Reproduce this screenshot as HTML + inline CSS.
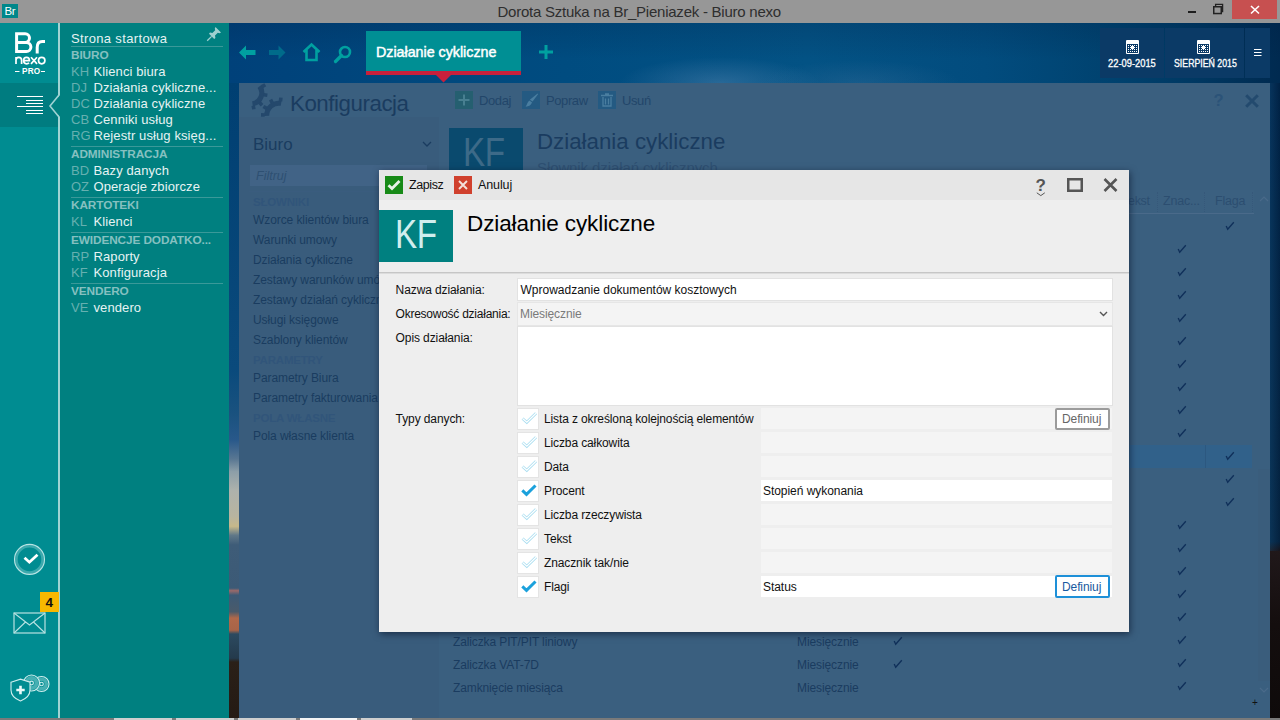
<!DOCTYPE html>
<html><head><meta charset="utf-8"><style>
*{margin:0;padding:0;box-sizing:border-box}
html,body{width:1280px;height:720px;overflow:hidden;background:#3a5f7f;font-family:"Liberation Sans",sans-serif}
.a{position:absolute;white-space:nowrap}
svg{position:absolute;overflow:visible}
</style></head><body>
<div class="a" style="left:0px;top:0px;width:1280px;height:23px;background:#979797;"></div>
<div class="a" style="left:2px;top:4px;width:16px;height:14px;background:#00878a;"></div>
<div class="a" style="left:4.5px;top:5.77px;font-size:11.5px;line-height:11.5px;color:#ffffff;letter-spacing:-0.3px;">Br</div>
<div class="a" style="left:497.5px;top:4.30px;font-size:15px;line-height:15px;color:#2e2e2e;letter-spacing:-0.24px;">Dorota Sztuka na Br_Pieniazek - Biuro nexo</div>
<div class="a" style="left:1188px;top:11px;width:8px;height:1.6px;background:#1e1e1e;"></div>
<svg style="left:1212px;top:3px" width="13" height="12"><rect x="1.75" y="3.75" width="7.5" height="6.8" fill="none" stroke="#222" stroke-width="1.5"/><path d="M3.6 3 V1.4 H10.6 V8.6 H9.6" fill="none" stroke="#222" stroke-width="1.3"/></svg>
<div class="a" style="left:1232px;top:0px;width:45px;height:19px;background:#c75050;"></div>
<svg style="left:1250px;top:5px" width="11" height="10"><path d="M1 1 L9 8.5 M9 1 L1 8.5" stroke="#fff" stroke-width="1.6"/></svg>
<div class="a" style="left:0px;top:23px;width:58px;height:697px;background:#008c91;"></div>
<div class="a" style="left:0px;top:83px;width:58px;height:44px;background:#007c80;"></div>
<div class="a" style="left:58px;top:23px;width:2px;height:697px;background:#9fd3d3;"></div>
<svg style="left:0px;top:23px" width="58" height="60"><g fill="none" stroke="#fff" stroke-width="3"><path d="M16.6 9.3 V29.1 M15.1 10.8 H25.2 A4.3 4.3 0 0 1 25.2 19.4 H16.6 M16.6 19.4 H26.3 A4.6 4.6 0 0 1 26.3 28.6 H15.1"/><path d="M37.2 30.6 V24.5 C37.2 20.5 39.3 18.6 42.3 18.6 H45"/></g><g fill="none" stroke="#fff" stroke-width="1.7"><path d="M16 34 V41 M16 37.2 C16 35 17.5 34.4 18.8 34.4 C20.3 34.4 21.6 35.2 21.6 37.2 V41"/><path d="M23.6 37.6 H29.4 C29.4 35.4 28 34.4 26.5 34.4 C24.8 34.4 23.6 35.8 23.6 37.6 C23.6 39.5 24.8 40.8 26.6 40.8 C27.6 40.8 28.5 40.4 29 39.8"/><path d="M31 34.2 L37 40.9 M37 34.2 L31 40.9"/><circle cx="41.7" cy="37.6" r="3.2"/></g><g stroke="#fff" stroke-width="1"><path d="M15 48.5 H19.5 M41 48.5 H45"/></g></svg>
<div class="a" style="left:22px;top:68.06px;font-size:8.2px;line-height:8.2px;color:#ffffff;font-weight:bold;letter-spacing:0.2px;">PRO</div>
<svg style="left:17px;top:95px" width="27" height="20"><g stroke="#fff" stroke-width="1"><path d="M0 1.5 H26"/><path d="M9 5.5 H26"/><path d="M9 8.5 H26"/><path d="M0 11.5 H26"/><path d="M9 15.5 H26"/><path d="M9 18.5 H26"/></g></svg>
<svg style="left:49px;top:95px" width="11" height="22"><path d="M11 0 L1.5 11 L11 22 Z" fill="#008080"/><path d="M10 0 L1 11 L10 22" fill="none" stroke="#9fd3d3" stroke-width="1.6"/></svg>
<svg style="left:13px;top:543px" width="34" height="34"><circle cx="16.5" cy="16.4" r="13.3" fill="none" stroke="rgba(200,240,240,.3)" stroke-width="3"/><circle cx="16.5" cy="16.4" r="15" fill="none" stroke="#b8e4e4" stroke-width="1.1"/><path d="M11.5 14.8 L16.4 19.2 L24.5 11.8" fill="none" stroke="#fff" stroke-width="2.8"/></svg>
<div class="a" style="left:40px;top:592px;width:19px;height:20px;background:#f8b800;"></div>
<div class="a" style="left:45.5px;top:596.07px;font-size:13.5px;line-height:13.5px;color:#111;font-weight:bold;">4</div>
<svg style="left:13px;top:612px" width="34" height="24"><rect x="1" y="1" width="31" height="20" fill="none" stroke="#b7e2e2" stroke-width="1.2"/><path d="M1 1 L16.5 13 L32 1 M1 21 L12.5 10 M32 21 L20.5 10" fill="none" stroke="#b7e2e2" stroke-width="1.1"/></svg>
<svg style="left:9px;top:673px" width="45" height="32"><g fill="none" stroke="#cfeeee" stroke-width="1.1"><circle cx="32.5" cy="11" r="7.5" fill="#008c91"/><circle cx="32.5" cy="11" r="4.8" stroke="rgba(200,240,240,.35)" stroke-width="3.5"/><circle cx="32.5" cy="11" r="1.8"/><circle cx="22.5" cy="10" r="8" fill="#008c91"/><circle cx="22.5" cy="10" r="5" stroke="rgba(200,240,240,.35)" stroke-width="3.8"/><circle cx="22.5" cy="10" r="1.9"/><path d="M2 9.2 L11.5 6.2 L21 9.2 V17 C21 22.5 16.5 26 11.5 28 C6.5 26 2 22.5 2 17 Z" fill="#008c91"/></g><path d="M11.5 12.8 V21.2 M7.3 17 H15.7" stroke="#e8f8f8" stroke-width="2.6"/></svg>
<div class="a" style="left:60px;top:23px;width:169px;height:697px;background:#008080;"></div>
<div class="a" style="left:71px;top:31.50px;font-size:13px;line-height:13px;color:#e6f3f3;letter-spacing:0.35px;">Strona startowa</div>
<svg style="left:206px;top:26px" width="16" height="16"><g fill="#9fd0d0"><path d="M9.5 1 L15 6.5 L13.6 7.2 L11.8 6.8 L9 9.6 L9.4 12 L8.2 13 L3 7.8 L4 6.6 L6.4 7 L9.2 4.2 L8.8 2.4 Z"/></g><path d="M5.6 10.4 L1.2 14.8" stroke="#9fd0d0" stroke-width="1.3"/></svg>
<div class="a" style="left:71px;top:46px;width:152px;height:1px;background:#3a9999;"></div>
<div class="a" style="left:71px;top:49.51px;font-size:11.8px;line-height:11.8px;color:#86c0c0;font-weight:bold;letter-spacing:-0.1px;">BIURO</div>
<div class="a" style="left:71px;top:64.50px;font-size:13px;line-height:13px;color:#66b0b0;">KH</div>
<div class="a" style="left:93.5px;top:64.50px;font-size:13px;line-height:13px;color:#e6f3f3;letter-spacing:0.1px;">Klienci biura</div>
<div class="a" style="left:71px;top:80.50px;font-size:13px;line-height:13px;color:#66b0b0;">DJ</div>
<div class="a" style="left:93.5px;top:80.50px;font-size:13px;line-height:13px;color:#e6f3f3;letter-spacing:0.1px;">Działania cykliczne...</div>
<div class="a" style="left:71px;top:96.50px;font-size:13px;line-height:13px;color:#66b0b0;">DC</div>
<div class="a" style="left:93.5px;top:96.50px;font-size:13px;line-height:13px;color:#e6f3f3;letter-spacing:0.1px;">Działania cykliczne</div>
<div class="a" style="left:71px;top:112.50px;font-size:13px;line-height:13px;color:#66b0b0;">CB</div>
<div class="a" style="left:93.5px;top:112.50px;font-size:13px;line-height:13px;color:#e6f3f3;letter-spacing:0.1px;">Cenniki usług</div>
<div class="a" style="left:71px;top:128.50px;font-size:13px;line-height:13px;color:#66b0b0;">RG</div>
<div class="a" style="left:93.5px;top:128.50px;font-size:13px;line-height:13px;color:#e6f3f3;letter-spacing:0.1px;">Rejestr usług księg...</div>
<div class="a" style="left:71px;top:145.5px;width:152px;height:1px;background:#3a9999;"></div>
<div class="a" style="left:71px;top:148.51px;font-size:11.8px;line-height:11.8px;color:#86c0c0;font-weight:bold;letter-spacing:-0.1px;">ADMINISTRACJA</div>
<div class="a" style="left:71px;top:163.50px;font-size:13px;line-height:13px;color:#66b0b0;">BD</div>
<div class="a" style="left:93.5px;top:163.50px;font-size:13px;line-height:13px;color:#e6f3f3;letter-spacing:0.1px;">Bazy danych</div>
<div class="a" style="left:71px;top:179.50px;font-size:13px;line-height:13px;color:#66b0b0;">OZ</div>
<div class="a" style="left:93.5px;top:179.50px;font-size:13px;line-height:13px;color:#e6f3f3;letter-spacing:0.1px;">Operacje zbiorcze</div>
<div class="a" style="left:71px;top:196.5px;width:152px;height:1px;background:#3a9999;"></div>
<div class="a" style="left:71px;top:199.51px;font-size:11.8px;line-height:11.8px;color:#86c0c0;font-weight:bold;letter-spacing:-0.1px;">KARTOTEKI</div>
<div class="a" style="left:71px;top:214.50px;font-size:13px;line-height:13px;color:#66b0b0;">KL</div>
<div class="a" style="left:93.5px;top:214.50px;font-size:13px;line-height:13px;color:#e6f3f3;letter-spacing:0.1px;">Klienci</div>
<div class="a" style="left:71px;top:231.5px;width:152px;height:1px;background:#3a9999;"></div>
<div class="a" style="left:71px;top:234.51px;font-size:11.8px;line-height:11.8px;color:#86c0c0;font-weight:bold;letter-spacing:-0.1px;">EWIDENCJE DODATKO...</div>
<div class="a" style="left:71px;top:249.50px;font-size:13px;line-height:13px;color:#66b0b0;">RP</div>
<div class="a" style="left:93.5px;top:249.50px;font-size:13px;line-height:13px;color:#e6f3f3;letter-spacing:0.1px;">Raporty</div>
<div class="a" style="left:71px;top:265.50px;font-size:13px;line-height:13px;color:#66b0b0;">KF</div>
<div class="a" style="left:93.5px;top:265.50px;font-size:13px;line-height:13px;color:#e6f3f3;letter-spacing:0.1px;">Konfiguracja</div>
<div class="a" style="left:71px;top:282.5px;width:152px;height:1px;background:#3a9999;"></div>
<div class="a" style="left:71px;top:285.51px;font-size:11.8px;line-height:11.8px;color:#86c0c0;font-weight:bold;letter-spacing:-0.1px;">VENDERO</div>
<div class="a" style="left:71px;top:300.50px;font-size:13px;line-height:13px;color:#66b0b0;">VE</div>
<div class="a" style="left:93.5px;top:300.50px;font-size:13px;line-height:13px;color:#e6f3f3;letter-spacing:0.1px;">vendero</div>
<div class="a" style="left:229px;top:23px;width:1051px;height:60px;background:linear-gradient(90deg,#00417a 0%,#00477d 16%,#004c80 32%,#035284 55%,#024c7e 72%,#00426f 84%,#003862 92%,#002a50 100%)"></div>
<div class="a" style="left:229px;top:23px;width:1051px;height:60px;background:linear-gradient(180deg,rgba(0,25,60,.18) 0%,rgba(0,0,0,0) 60%)"></div>
<div class="a" style="left:620px;top:40px;width:200px;height:43px;background:radial-gradient(ellipse 50% 60% at 50% 100%,rgba(110,150,190,.35) 0%,rgba(110,150,190,0) 100%)"></div>
<div class="a" style="left:760px;top:45px;width:200px;height:38px;background:radial-gradient(ellipse 50% 60% at 50% 100%,rgba(90,130,170,.22) 0%,rgba(90,130,170,0) 100%)"></div>
<svg style="left:239px;top:45px" width="17" height="15"><path d="M0 7.5 L7 0.5 V5 H16.5 V10 H7 V14.5 Z" fill="#00a0a0"/></svg>
<svg style="left:269px;top:45px" width="17" height="15"><path d="M16.5 7.5 L9.5 0.5 V5 H0 V10 H9.5 V14.5 Z" fill="#006b8a"/></svg>
<svg style="left:302px;top:43px" width="19" height="19"><path d="M1.5 9 L9.5 1.5 L17.5 9 M4.5 7 V17 H14.5 V7" fill="none" stroke="#00a0a0" stroke-width="2.6" stroke-linejoin="miter"/></svg>
<svg style="left:334px;top:45px" width="18" height="18"><circle cx="11" cy="7" r="5" fill="none" stroke="#00a0a0" stroke-width="2.6"/><path d="M7.5 10.5 L1.5 16.5" stroke="#00a0a0" stroke-width="3.2" stroke-linecap="round"/></svg>
<div class="a" style="left:366px;top:31px;width:155px;height:40px;background:#008f94;"></div>
<div class="a" style="left:366px;top:71px;width:155px;height:4px;background:#c8203c;"></div>
<svg style="left:435px;top:74px" width="17" height="9"><path d="M0 0 H17 L8.5 8.5 Z" fill="#c8203c"/></svg>
<div class="a" style="left:376px;top:44.90px;font-size:14.3px;line-height:14.3px;color:#ffffff;letter-spacing:-0.02px;-webkit-text-stroke:0.45px #fff;">Działanie cykliczne</div>
<svg style="left:539px;top:45px" width="14" height="14"><path d="M7 0 V14 M0 7 H14" stroke="#00a0a0" stroke-width="3"/></svg>
<div class="a" style="left:1100px;top:28px;width:64px;height:50px;background:#0b3a66;"></div>
<div class="a" style="left:1165px;top:28px;width:79px;height:50px;background:#0b3a66;"></div>
<div class="a" style="left:1245px;top:28px;width:25px;height:50px;background:#0b3a66;"></div>
<svg style="left:1126px;top:40px" width="14" height="15"><rect x="0" y="0" width="13" height="14" rx="1" fill="#fff"/><rect x="1" y="4" width="11" height="9" fill="#0b3a66"/><g fill="#fff"><rect x="2" y="5" width="1" height="1"/><rect x="2" y="7" width="1" height="1"/><rect x="2" y="9" width="1" height="1"/><rect x="2" y="11" width="1" height="1"/><rect x="4" y="5" width="1" height="1"/><rect x="4" y="7" width="1" height="1"/><rect x="4" y="9" width="1" height="1"/><rect x="4" y="11" width="1" height="1"/><rect x="6" y="5" width="1" height="1"/><rect x="6" y="7" width="1" height="1"/><rect x="6" y="9" width="1" height="1"/><rect x="6" y="11" width="1" height="1"/><rect x="8" y="5" width="1" height="1"/><rect x="8" y="7" width="1" height="1"/><rect x="8" y="9" width="1" height="1"/><rect x="8" y="11" width="1" height="1"/><rect x="10" y="5" width="1" height="1"/><rect x="10" y="7" width="1" height="1"/><rect x="10" y="9" width="1" height="1"/><rect x="10" y="11" width="1" height="1"/><rect x="5" y="6" width="3" height="3"/></g></svg>
<svg style="left:1197px;top:40px" width="14" height="15"><rect x="0" y="0" width="13" height="14" rx="1" fill="#fff"/><rect x="1" y="4" width="11" height="9" fill="#0b3a66"/><g fill="#fff"><rect x="2" y="5" width="1" height="1"/><rect x="2" y="7" width="1" height="1"/><rect x="2" y="9" width="1" height="1"/><rect x="2" y="11" width="1" height="1"/><rect x="4" y="5" width="1" height="1"/><rect x="4" y="7" width="1" height="1"/><rect x="4" y="9" width="1" height="1"/><rect x="4" y="11" width="1" height="1"/><rect x="6" y="5" width="1" height="1"/><rect x="6" y="7" width="1" height="1"/><rect x="6" y="9" width="1" height="1"/><rect x="6" y="11" width="1" height="1"/><rect x="8" y="5" width="1" height="1"/><rect x="8" y="7" width="1" height="1"/><rect x="8" y="9" width="1" height="1"/><rect x="8" y="11" width="1" height="1"/><rect x="10" y="5" width="1" height="1"/><rect x="10" y="7" width="1" height="1"/><rect x="10" y="9" width="1" height="1"/><rect x="10" y="11" width="1" height="1"/><rect x="5" y="6" width="3" height="3"/></g></svg>
<div class="a" style="left:1108px;top:58.31px;font-size:10.5px;line-height:10.5px;color:#ffffff;-webkit-text-stroke:0.3px #fff;transform:scaleX(0.89);transform-origin:0 0;">22-09-2015</div>
<div class="a" style="left:1173.5px;top:58.31px;font-size:10.5px;line-height:10.5px;color:#ffffff;-webkit-text-stroke:0.3px #fff;transform:scaleX(0.835);transform-origin:0 0;">SIERPIEŃ 2015</div>
<svg style="left:1254px;top:48px" width="8" height="9"><path d="M0 1.5 H7.5 M0 4.5 H7.5 M0 7.5 H7.5" stroke="#fff" stroke-width="1.1"/></svg>
<div class="a" style="left:229px;top:83px;width:10px;height:637px;background:linear-gradient(180deg,#003f72 0%,#0a4a7c 45%,#1a527f 52%,#28588a 56%,#587692 59%,#8c9ea8 61%,#aeb2ac 64%,#b8b4a0 68%,#c6b88a 69.6%,#607888 71%,#3e5c78 72.5%,#3c5a76 79.3%,#9a6a6a 79.7%,#3c5a76 80.4%,#4a5a6a 83%,#b0684a 84%,#a86448 85.9%,#2c4a60 86.5%,#243a4c 90.3%,#2a2018 90.9%,#241a14 100%)"></div>
<div class="a" style="left:1270px;top:83px;width:10px;height:637px;background:linear-gradient(180deg,#002a52 0%,#042c50 40%,#062a4a 72%,#20181a 73.5%,#140e0e 85%,#0e0a0a 100%)"></div>
<div class="a" style="left:1270px;top:83px;width:10px;height:468px;background:linear-gradient(90deg,rgba(20,70,110,.35),rgba(0,10,30,.25))"></div>
<div class="a" style="left:239px;top:83px;width:1031px;height:635px;background:#3a5f7f;"></div>
<div class="a" style="left:239px;top:117px;width:200px;height:601px;background:#395c7c;"></div>
<svg style="left:248px;top:83px" width="40" height="40"><g fill="none" stroke="#24486c" stroke-width="5"><path d="M11.51 3.35 A10.8 10.8 0 0 1 4.50 20.69"/><path d="M33.14 20.39 A12.3 12.3 0 0 0 18.71 32.93"/></g><g fill="#24486c"><rect x="-0.5" y="-1.8" width="3.7" height="3.6" transform="translate(3 10) rotate(-30) translate(13.3 0)"/><rect x="-0.5" y="-1.8" width="3.7" height="3.6" transform="translate(3 10) rotate(8) translate(13.3 0)"/><rect x="-0.5" y="-1.8" width="3.7" height="3.6" transform="translate(3 10) rotate(48) translate(13.3 0)"/><rect x="-0.5" y="-1.8" width="3.7" height="3.6" transform="translate(3 10) rotate(80) translate(13.3 0)"/><rect x="-0.5" y="-1.8" width="3.7" height="3.6" transform="translate(31 32.5) rotate(-84) translate(14.8 0)"/><rect x="-0.5" y="-1.8" width="3.7" height="3.6" transform="translate(31 32.5) rotate(-118) translate(14.8 0)"/><rect x="-0.5" y="-1.8" width="3.7" height="3.6" transform="translate(31 32.5) rotate(-150) translate(14.8 0)"/><rect x="-0.5" y="-1.8" width="3.7" height="3.6" transform="translate(31 32.5) rotate(-178) translate(14.8 0)"/></g></svg>
<div class="a" style="left:290px;top:93.12px;font-size:22.3px;line-height:22.3px;color:#1a3c60;letter-spacing:-0.45px;">Konfiguracja</div>
<div class="a" style="left:253px;top:136.11px;font-size:17px;line-height:17px;color:#1a3c60;">Biuro</div>
<svg style="left:422px;top:141px" width="10" height="6"><path d="M1 1 L5 5 L9 1" fill="none" stroke="#1a3c60" stroke-width="1.3"/></svg>
<div class="a" style="left:250px;top:165px;width:177px;height:21px;background:#416386;"></div>
<div class="a" style="left:256px;top:170.42px;font-size:12.5px;line-height:12.5px;color:#2e5072;font-style:italic;">Filtruj</div>
<div class="a" style="left:249px;top:191px;width:190px;height:1px;background:#3a5c7e;"></div>
<div class="a" style="left:253px;top:196.97px;font-size:11.5px;line-height:11.5px;color:#31557a;font-weight:bold;letter-spacing:-0.2px;">SŁOWNIKI</div>
<div class="a" style="left:253px;top:213.54px;font-size:12px;line-height:12px;color:#1a3c60;letter-spacing:-0.08px;">Wzorce klientów biura</div>
<div class="a" style="left:253px;top:233.54px;font-size:12px;line-height:12px;color:#1a3c60;letter-spacing:-0.08px;">Warunki umowy</div>
<div class="a" style="left:253px;top:253.54px;font-size:12px;line-height:12px;color:#1a3c60;letter-spacing:-0.08px;">Działania cykliczne</div>
<div class="a" style="left:253px;top:273.54px;font-size:12px;line-height:12px;color:#1a3c60;letter-spacing:-0.08px;">Zestawy warunków umów</div>
<div class="a" style="left:253px;top:293.54px;font-size:12px;line-height:12px;color:#1a3c60;letter-spacing:-0.08px;">Zestawy działań cyklicznych</div>
<div class="a" style="left:253px;top:313.54px;font-size:12px;line-height:12px;color:#1a3c60;letter-spacing:-0.08px;">Usługi księgowe</div>
<div class="a" style="left:253px;top:333.54px;font-size:12px;line-height:12px;color:#1a3c60;letter-spacing:-0.08px;">Szablony klientów</div>
<div class="a" style="left:253px;top:354.97px;font-size:11.5px;line-height:11.5px;color:#31557a;font-weight:bold;letter-spacing:-0.2px;">PARAMETRY</div>
<div class="a" style="left:253px;top:371.54px;font-size:12px;line-height:12px;color:#1a3c60;letter-spacing:-0.08px;">Parametry Biura</div>
<div class="a" style="left:253px;top:391.54px;font-size:12px;line-height:12px;color:#1a3c60;letter-spacing:-0.08px;">Parametry fakturowania</div>
<div class="a" style="left:253px;top:412.97px;font-size:11.5px;line-height:11.5px;color:#31557a;font-weight:bold;letter-spacing:-0.2px;">POLA WŁASNE</div>
<div class="a" style="left:253px;top:429.54px;font-size:12px;line-height:12px;color:#1a3c60;letter-spacing:-0.08px;">Pola własne klienta</div>
<div class="a" style="left:455px;top:91px;width:18px;height:18px;background:#255f70;"></div>
<svg style="left:458px;top:94px" width="12" height="12"><path d="M6 0.5 V11.5 M0.5 6 H11.5" stroke="#487f90" stroke-width="2"/></svg>
<div class="a" style="left:479px;top:94.00px;font-size:13px;line-height:13px;color:#22466a;letter-spacing:-0.4px;">Dodaj</div>
<div class="a" style="left:522px;top:91px;width:18px;height:18px;background:#245a82;"></div>
<svg style="left:524px;top:93px" width="14" height="14"><path d="M13.6 0.4 L14 1.2 L8.6 8.6 L5.8 6.8 Z" fill="#4a7ea0"/><path d="M5.2 7.4 L8 9.3 C7.4 12 5 13.6 1.6 13.8 C2.8 12.2 3 9.6 5.2 7.4 Z" fill="#4a7ea0"/></svg>
<div class="a" style="left:546px;top:94.00px;font-size:13px;line-height:13px;color:#22466a;letter-spacing:-0.4px;">Popraw</div>
<div class="a" style="left:598px;top:91px;width:18px;height:18px;background:#245a82;"></div>
<svg style="left:601px;top:93px" width="12" height="14"><path d="M0 2.5 H12 M4 1 H8 M2 4 V13 H10 V4 M4.5 5.5 V11.5 M7.5 5.5 V11.5" fill="none" stroke="#4a7ea0" stroke-width="1.3"/></svg>
<div class="a" style="left:622px;top:94.00px;font-size:13px;line-height:13px;color:#22466a;letter-spacing:-0.4px;">Usuń</div>
<div class="a" style="left:1213.5px;top:91.53px;font-size:16.5px;line-height:16.5px;color:#2b5378;font-weight:bold;">?</div>
<svg style="left:1244px;top:93px" width="16" height="16"><path d="M2.2 2.2 L13.8 13.8 M13.8 2.2 L2.2 13.8" stroke="#234a6e" stroke-width="3"/></svg>
<div class="a" style="left:449px;top:128px;width:74px;height:60px;background:#0a4a6e;"></div>
<div class="a" style="left:463px;top:131.72px;font-size:40.5px;line-height:40.5px;color:#3d6a88;letter-spacing:-0.5px;transform:scaleX(0.82);transform-origin:0 0;">KF</div>
<div class="a" style="left:537px;top:130.62px;font-size:22.3px;line-height:22.3px;color:#1a3c60;letter-spacing:0px;">Działania cykliczne</div>
<div class="a" style="left:537px;top:159.80px;font-size:15px;line-height:15px;color:#2e5072;letter-spacing:-0.1px;">Słownik działań cyklicznych</div>
<div class="a" style="left:449px;top:190px;width:805px;height:23px;background:#3b6080;"></div>
<div class="a" style="left:449px;top:213px;width:805px;height:1px;background:#4a6a8a"></div>
<div class="a" style="left:1128px;top:195.42px;font-size:12.5px;line-height:12.5px;color:#2c4e70;letter-spacing:-0.3px;">ekst</div>
<div class="a" style="left:1157px;top:192px;width:1px;height:20px;border-left:1px dotted #36587a"></div>
<div class="a" style="left:1204px;top:192px;width:1px;height:20px;border-left:1px dotted #36587a"></div>
<div class="a" style="left:1252px;top:192px;width:1px;height:20px;border-left:1px dotted #36587a"></div>
<div class="a" style="left:1163px;top:195.42px;font-size:12.5px;line-height:12.5px;color:#2c4e70;letter-spacing:-0.2px;">Znac...</div>
<div class="a" style="left:1215px;top:195.42px;font-size:12.5px;line-height:12.5px;color:#2c4e70;letter-spacing:-0.2px;">Flaga</div>
<svg style="left:1259px;top:196px" width="10" height="6"><path d="M1 5 L5 1 L9 5" fill="none" stroke="#4a6a8a" stroke-width="1.2"/></svg>
<div class="a" style="left:449px;top:445px;width:803px;height:23px;background:#31618a;"></div>
<div class="a" style="left:1205px;top:445px;width:1px;height:23px;background:#2c5880"></div>
<svg style="left:1225px;top:221px" width="10" height="9"><path d="M1.2 5 L2.7 8.2 L8.8 1.2" fill="none" stroke="#10305a" stroke-width="1.35"/></svg>
<svg style="left:1177px;top:244px" width="10" height="9"><path d="M1.2 5 L2.7 8.2 L8.8 1.2" fill="none" stroke="#10305a" stroke-width="1.35"/></svg>
<svg style="left:1177px;top:267px" width="10" height="9"><path d="M1.2 5 L2.7 8.2 L8.8 1.2" fill="none" stroke="#10305a" stroke-width="1.35"/></svg>
<svg style="left:1177px;top:290px" width="10" height="9"><path d="M1.2 5 L2.7 8.2 L8.8 1.2" fill="none" stroke="#10305a" stroke-width="1.35"/></svg>
<svg style="left:1177px;top:313px" width="10" height="9"><path d="M1.2 5 L2.7 8.2 L8.8 1.2" fill="none" stroke="#10305a" stroke-width="1.35"/></svg>
<svg style="left:1177px;top:336px" width="10" height="9"><path d="M1.2 5 L2.7 8.2 L8.8 1.2" fill="none" stroke="#10305a" stroke-width="1.35"/></svg>
<svg style="left:1177px;top:359px" width="10" height="9"><path d="M1.2 5 L2.7 8.2 L8.8 1.2" fill="none" stroke="#10305a" stroke-width="1.35"/></svg>
<svg style="left:1177px;top:382px" width="10" height="9"><path d="M1.2 5 L2.7 8.2 L8.8 1.2" fill="none" stroke="#10305a" stroke-width="1.35"/></svg>
<svg style="left:1177px;top:405px" width="10" height="9"><path d="M1.2 5 L2.7 8.2 L8.8 1.2" fill="none" stroke="#10305a" stroke-width="1.35"/></svg>
<svg style="left:1177px;top:428px" width="10" height="9"><path d="M1.2 5 L2.7 8.2 L8.8 1.2" fill="none" stroke="#10305a" stroke-width="1.35"/></svg>
<svg style="left:1225px;top:451px" width="10" height="9"><path d="M1.2 5 L2.7 8.2 L8.8 1.2" fill="none" stroke="#10305a" stroke-width="1.35"/></svg>
<svg style="left:1225px;top:474px" width="10" height="9"><path d="M1.2 5 L2.7 8.2 L8.8 1.2" fill="none" stroke="#10305a" stroke-width="1.35"/></svg>
<svg style="left:1225px;top:497px" width="10" height="9"><path d="M1.2 5 L2.7 8.2 L8.8 1.2" fill="none" stroke="#10305a" stroke-width="1.35"/></svg>
<svg style="left:1177px;top:520px" width="10" height="9"><path d="M1.2 5 L2.7 8.2 L8.8 1.2" fill="none" stroke="#10305a" stroke-width="1.35"/></svg>
<svg style="left:1177px;top:543px" width="10" height="9"><path d="M1.2 5 L2.7 8.2 L8.8 1.2" fill="none" stroke="#10305a" stroke-width="1.35"/></svg>
<svg style="left:1177px;top:566px" width="10" height="9"><path d="M1.2 5 L2.7 8.2 L8.8 1.2" fill="none" stroke="#10305a" stroke-width="1.35"/></svg>
<svg style="left:1177px;top:589px" width="10" height="9"><path d="M1.2 5 L2.7 8.2 L8.8 1.2" fill="none" stroke="#10305a" stroke-width="1.35"/></svg>
<svg style="left:1177px;top:612px" width="10" height="9"><path d="M1.2 5 L2.7 8.2 L8.8 1.2" fill="none" stroke="#10305a" stroke-width="1.35"/></svg>
<svg style="left:1177px;top:635px" width="10" height="9"><path d="M1.2 5 L2.7 8.2 L8.8 1.2" fill="none" stroke="#10305a" stroke-width="1.35"/></svg>
<svg style="left:1177px;top:658px" width="10" height="9"><path d="M1.2 5 L2.7 8.2 L8.8 1.2" fill="none" stroke="#10305a" stroke-width="1.35"/></svg>
<svg style="left:1177px;top:681px" width="10" height="9"><path d="M1.2 5 L2.7 8.2 L8.8 1.2" fill="none" stroke="#10305a" stroke-width="1.35"/></svg>
<div class="a" style="left:1258px;top:469px;width:12px;height:212px;background:#3a5d7c;"></div>
<svg style="left:1259px;top:687px" width="10" height="6"><path d="M1 1 L5 5 L9 1" fill="none" stroke="#4a6a8a" stroke-width="1.2"/></svg>
<div class="a" style="left:453px;top:635.84px;font-size:12px;line-height:12px;color:#1a3c60;letter-spacing:-0.12px;">Zaliczka PIT/PIT liniowy</div>
<div class="a" style="left:797px;top:635.84px;font-size:12px;line-height:12px;color:#1a3c60;letter-spacing:-0.1px;">Miesięcznie</div>
<svg style="left:893px;top:636px" width="10" height="9"><path d="M1.2 5 L2.7 8.2 L8.8 1.2" fill="none" stroke="#10305a" stroke-width="1.35"/></svg>
<div class="a" style="left:453px;top:658.84px;font-size:12px;line-height:12px;color:#1a3c60;letter-spacing:-0.12px;">Zaliczka VAT-7D</div>
<div class="a" style="left:797px;top:658.84px;font-size:12px;line-height:12px;color:#1a3c60;letter-spacing:-0.1px;">Miesięcznie</div>
<svg style="left:893px;top:659px" width="10" height="9"><path d="M1.2 5 L2.7 8.2 L8.8 1.2" fill="none" stroke="#10305a" stroke-width="1.35"/></svg>
<div class="a" style="left:453px;top:681.84px;font-size:12px;line-height:12px;color:#1a3c60;letter-spacing:-0.12px;">Zamknięcie miesiąca</div>
<div class="a" style="left:797px;top:681.84px;font-size:12px;line-height:12px;color:#1a3c60;letter-spacing:-0.1px;">Miesięcznie</div>
<div class="a" style="left:1252px;top:697.53px;font-size:10px;line-height:10px;color:#111;">+</div>
<div class="a" style="left:0px;top:718px;width:1280px;height:2px;background:#7a7a7a;"></div>
<div class="a" style="left:114px;top:718px;width:58px;height:2px;background:#cfcfcf;"></div>
<div class="a" style="left:176px;top:718px;width:58px;height:2px;background:#cfcfcf;"></div>
<div class="a" style="left:238px;top:718px;width:58px;height:2px;background:#cfcfcf;"></div>
<div class="a" style="left:300px;top:718px;width:57px;height:2px;background:#f4f4f4;"></div>
<div class="a" style="left:361px;top:718px;width:51px;height:2px;background:#cfcfcf;"></div>
<div class="a" style="left:379px;top:170px;width:750px;height:462px;background:#eeeeee;box-shadow:1px 2px 7px rgba(0,10,30,.55)"></div>
<div class="a" style="left:379px;top:170px;width:750px;height:30px;background:#e6e6e6;"></div>
<div class="a" style="left:385px;top:176px;width:18px;height:18px;background:#178a17;"></div>
<svg style="left:387px;top:179px" width="14" height="12"><path d="M1.5 6.2 L5 9.6 L12.5 2" fill="none" stroke="#e6f2e6" stroke-width="2.8"/></svg>
<div class="a" style="left:409px;top:179.42px;font-size:12.5px;line-height:12.5px;color:#111;letter-spacing:-0.4px;">Zapisz</div>
<div class="a" style="left:454px;top:176px;width:18px;height:18px;background:#d0412e;"></div>
<svg style="left:458px;top:180px" width="10" height="10"><path d="M1 1 L9 9 M9 1 L1 9" stroke="#f4e0dc" stroke-width="1.9"/></svg>
<div class="a" style="left:478px;top:179.42px;font-size:12.5px;line-height:12.5px;color:#111;letter-spacing:-0.1px;">Anuluj</div>
<div class="a" style="left:1035.5px;top:177.11px;font-size:17px;line-height:17px;color:#555;font-weight:bold;">?</div>
<svg style="left:1036px;top:192px" width="10" height="5"><path d="M0.8 0.8 L4.8 3.6 L8.8 0.8" fill="none" stroke="#555" stroke-width="1"/></svg>
<svg style="left:1067px;top:178px" width="16" height="14"><rect x="1.25" y="1.25" width="13.5" height="11.5" fill="none" stroke="#555" stroke-width="2.5"/></svg>
<svg style="left:1103px;top:178px" width="15" height="14"><path d="M1.5 1 L13.5 13 M13.5 1 L1.5 13" stroke="#555" stroke-width="2.6"/></svg>
<div class="a" style="left:379px;top:210px;width:74px;height:52px;background:#008080;"></div>
<div class="a" style="left:394.5px;top:214.42px;font-size:40.5px;line-height:40.5px;color:#d0eeee;letter-spacing:-0.5px;transform:scaleX(0.82);transform-origin:0 0;">KF</div>
<div class="a" style="left:467px;top:212.95px;font-size:22.5px;line-height:22.5px;color:#000;letter-spacing:-0.1px;">Działanie cykliczne</div>
<div class="a" style="left:379px;top:272px;width:750px;height:1px;background:#c6c6c6;"></div>
<div class="a" style="left:379px;top:273px;width:750px;height:1px;background:#dcdcdc;"></div>
<div class="a" style="left:395.6px;top:283.84px;font-size:12px;line-height:12px;color:#111;letter-spacing:-0.1px;">Nazwa działania:</div>
<div class="a" style="left:395.6px;top:307.84px;font-size:12px;line-height:12px;color:#111;letter-spacing:-0.25px;">Okresowość działania:</div>
<div class="a" style="left:395.6px;top:331.84px;font-size:12px;line-height:12px;color:#111;letter-spacing:-0.1px;">Opis działania:</div>
<div class="a" style="left:395.6px;top:412.84px;font-size:12px;line-height:12px;color:#111;letter-spacing:-0.1px;">Typy danych:</div>
<div class="a" style="left:517px;top:278px;width:596px;height:23px;background:#fff;border:1px solid #e2e2e2"></div>
<div class="a" style="left:520.5px;top:283.84px;font-size:12px;line-height:12px;color:#111;">Wprowadzanie dokumentów kosztowych</div>
<div class="a" style="left:517px;top:302px;width:596px;height:24px;background:#f4f4f4;border:1px solid #e6e6e6"></div>
<div class="a" style="left:520px;top:307.84px;font-size:12px;line-height:12px;color:#7a7a7a;letter-spacing:-0.1px;">Miesięcznie</div>
<svg style="left:1099px;top:311px" width="9" height="6"><path d="M1 1 L4.5 4.5 L8 1" fill="none" stroke="#555" stroke-width="1.4"/></svg>
<div class="a" style="left:517px;top:326px;width:596px;height:80px;background:#fff;border:1px solid #e2e2e2"></div>
<div class="a" style="left:517px;top:408px;width:22px;height:22px;background:#fff;border:1px solid #e4e4e4"></div>
<svg style="left:519px;top:410px" width="18" height="18"><path d="M3.5 8.5 L7.8 12.3 L17 3.2" fill="none" stroke="#a8ddf0" stroke-width="2.8"/><path d="M3.5 8.5 L7.8 12.3 L17 3.2" fill="none" stroke="#fff" stroke-width="1.2"/></svg>
<div class="a" style="left:544px;top:412.84px;font-size:12px;line-height:12px;color:#111;letter-spacing:-0.12px;">Lista z określoną kolejnością elementów</div>
<div class="a" style="left:761px;top:408px;width:351px;height:21px;background:#f4f4f4"></div>
<div class="a" style="left:517px;top:432px;width:22px;height:22px;background:#fff;border:1px solid #e4e4e4"></div>
<svg style="left:519px;top:434px" width="18" height="18"><path d="M3.5 8.5 L7.8 12.3 L17 3.2" fill="none" stroke="#a8ddf0" stroke-width="2.8"/><path d="M3.5 8.5 L7.8 12.3 L17 3.2" fill="none" stroke="#fff" stroke-width="1.2"/></svg>
<div class="a" style="left:544px;top:436.84px;font-size:12px;line-height:12px;color:#111;letter-spacing:-0.12px;">Liczba całkowita</div>
<div class="a" style="left:761px;top:432px;width:351px;height:21px;background:#f4f4f4"></div>
<div class="a" style="left:517px;top:456px;width:22px;height:22px;background:#fff;border:1px solid #e4e4e4"></div>
<svg style="left:519px;top:458px" width="18" height="18"><path d="M3.5 8.5 L7.8 12.3 L17 3.2" fill="none" stroke="#a8ddf0" stroke-width="2.8"/><path d="M3.5 8.5 L7.8 12.3 L17 3.2" fill="none" stroke="#fff" stroke-width="1.2"/></svg>
<div class="a" style="left:544px;top:460.84px;font-size:12px;line-height:12px;color:#111;letter-spacing:-0.12px;">Data</div>
<div class="a" style="left:761px;top:456px;width:351px;height:21px;background:#f4f4f4"></div>
<div class="a" style="left:517px;top:480px;width:22px;height:22px;background:#fff;border:1px solid #e4e4e4"></div>
<svg style="left:519px;top:482px" width="18" height="18"><path d="M3.3 8.3 L7.5 12.3 L16.5 3.5" fill="none" stroke="#1ba1dc" stroke-width="3"/></svg>
<div class="a" style="left:544px;top:484.84px;font-size:12px;line-height:12px;color:#111;letter-spacing:-0.12px;">Procent</div>
<div class="a" style="left:761px;top:480px;width:351px;height:21px;background:#ffffff"></div>
<div class="a" style="left:763px;top:484.84px;font-size:12px;line-height:12px;color:#111;letter-spacing:-0.05px;">Stopień wykonania</div>
<div class="a" style="left:517px;top:504px;width:22px;height:22px;background:#fff;border:1px solid #e4e4e4"></div>
<svg style="left:519px;top:506px" width="18" height="18"><path d="M3.5 8.5 L7.8 12.3 L17 3.2" fill="none" stroke="#a8ddf0" stroke-width="2.8"/><path d="M3.5 8.5 L7.8 12.3 L17 3.2" fill="none" stroke="#fff" stroke-width="1.2"/></svg>
<div class="a" style="left:544px;top:508.84px;font-size:12px;line-height:12px;color:#111;letter-spacing:-0.12px;">Liczba rzeczywista</div>
<div class="a" style="left:761px;top:504px;width:351px;height:21px;background:#f4f4f4"></div>
<div class="a" style="left:517px;top:528px;width:22px;height:22px;background:#fff;border:1px solid #e4e4e4"></div>
<svg style="left:519px;top:530px" width="18" height="18"><path d="M3.5 8.5 L7.8 12.3 L17 3.2" fill="none" stroke="#a8ddf0" stroke-width="2.8"/><path d="M3.5 8.5 L7.8 12.3 L17 3.2" fill="none" stroke="#fff" stroke-width="1.2"/></svg>
<div class="a" style="left:544px;top:532.84px;font-size:12px;line-height:12px;color:#111;letter-spacing:-0.12px;">Tekst</div>
<div class="a" style="left:761px;top:528px;width:351px;height:21px;background:#f4f4f4"></div>
<div class="a" style="left:517px;top:552px;width:22px;height:22px;background:#fff;border:1px solid #e4e4e4"></div>
<svg style="left:519px;top:554px" width="18" height="18"><path d="M3.5 8.5 L7.8 12.3 L17 3.2" fill="none" stroke="#a8ddf0" stroke-width="2.8"/><path d="M3.5 8.5 L7.8 12.3 L17 3.2" fill="none" stroke="#fff" stroke-width="1.2"/></svg>
<div class="a" style="left:544px;top:556.84px;font-size:12px;line-height:12px;color:#111;letter-spacing:-0.12px;">Znacznik tak/nie</div>
<div class="a" style="left:761px;top:552px;width:351px;height:21px;background:#f4f4f4"></div>
<div class="a" style="left:517px;top:576px;width:22px;height:22px;background:#fff;border:1px solid #e4e4e4"></div>
<svg style="left:519px;top:578px" width="18" height="18"><path d="M3.3 8.3 L7.5 12.3 L16.5 3.5" fill="none" stroke="#1ba1dc" stroke-width="3"/></svg>
<div class="a" style="left:544px;top:580.84px;font-size:12px;line-height:12px;color:#111;letter-spacing:-0.12px;">Flagi</div>
<div class="a" style="left:761px;top:576px;width:351px;height:21px;background:#ffffff"></div>
<div class="a" style="left:763px;top:580.84px;font-size:12px;line-height:12px;color:#111;letter-spacing:-0.05px;">Status</div>
<div class="a" style="left:1055px;top:408px;width:55px;height:22px;background:#fff;border:2px solid #9b9b9b;border-radius:2px"></div>
<div class="a" style="left:1062px;top:413.34px;font-size:12px;line-height:12px;color:#666;letter-spacing:-0.1px;">Definiuj</div>
<div class="a" style="left:1055px;top:575px;width:55px;height:23px;background:#fff;border:2px solid #1e90d8;border-radius:2px"></div>
<div class="a" style="left:1062px;top:581.34px;font-size:12px;line-height:12px;color:#1a5aa0;letter-spacing:-0.1px;">Definiuj</div>
</body></html>
